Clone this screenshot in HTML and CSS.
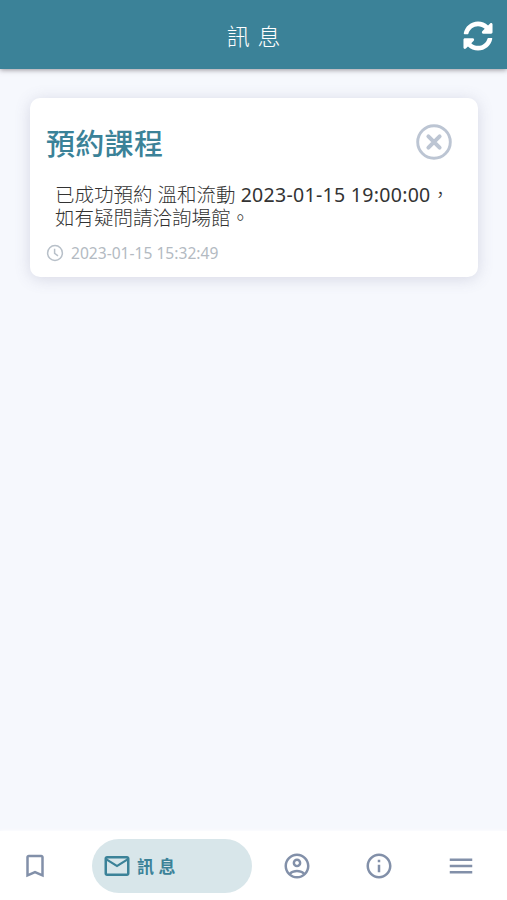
FILE: index.html
```html
<!DOCTYPE html>
<html lang="zh-Hant">
  <head>
    <meta charset="UTF-8" />
    <meta name="viewport" content="width=device-width, initial-scale=1.0" />
    <title>訊息</title>
    <link rel="stylesheet" href="styles.css">
  </head>

  <body>
    <header class="header">
      <h1 class="header-title">訊 息</h1>
      <button class="icon-button refresh-button" aria-label="重新整理">
        <svg viewBox="0 0 512 512" width="30" height="30">
          <path d="M370.72 133.28C339.458 104.008 298.888 87.962 255.848 88c-77.458.068-144.328 53.178-162.791 126.85-1.344 5.363-6.122 9.15-11.651 9.15H24.103c-7.498 0-13.194-6.807-11.807-14.176C33.933 94.924 134.813 8 256 8c66.448 0 126.791 26.136 171.315 68.685L463.03 40.97C478.149 25.851 504 36.559 504 57.941V192c0 13.255-10.745 24-24 24H345.941c-21.382 0-32.09-25.851-16.971-40.971l41.75-41.749zM32 296h134.059c21.382 0 32.09 25.851 16.971 40.971l-41.75 41.75c31.262 29.273 71.835 45.319 114.876 45.28 77.418-.07 144.315-53.144 162.787-126.849 1.344-5.363 6.122-9.15 11.651-9.15h57.304c7.498 0 13.194 6.807 11.807 14.176C478.067 417.076 377.187 504 256 504c-66.448 0-126.791-26.136-171.315-68.685L48.97 471.03C33.851 486.149 8 475.441 8 454.059V320c0-13.255 10.745-24 24-24z" />
        </svg>
      </button>
    </header>

    <main class="messages">
      <article class="card">
        <div class="card-top">
          <h2 class="card-title">預約課程</h2>
          <button class="icon-button close-button" aria-label="刪除">
            <svg viewBox="0 0 36 36" width="36" height="36">
              <circle cx="18" cy="18" r="16.3" stroke-width="2.9" />
              <path d="M12.4 12.4l11.2 11.2M23.6 12.4L12.4 23.6" stroke-width="4" stroke-linecap="round" />
            </svg>
          </button>
        </div>
        <p class="card-text">已成功預約 溫和流動 <span class="card-date">2023-01-15 19:00:00</span>，<br>如有疑問請洽詢場館。</p>
        <div class="card-time">
          <svg viewBox="0 0 18 18" width="18" height="18">
            <circle cx="9" cy="9" r="7.4" />
            <path d="M8.6 4.8v4.5l3.4 2.5" />
          </svg>
          <time>2023-01-15 15:32:49</time>
        </div>
      </article>
    </main>

    <nav class="nav">
      <a class="nav-item">
        <svg viewBox="0 0 24 24" width="30" height="30">
          <path d="M17 3H7c-1.1 0-2 .9-2 2v16l7-3 7 3V5c0-1.1-.9-2-2-2zm0 15l-5-2.18L7 18V5h10v13z" />
        </svg>
      </a>
      <a class="nav-item active">
        <svg viewBox="0 0 24 24" width="30" height="30">
          <path d="M22 6c0-1.1-.9-2-2-2H4c-1.1 0-2 .9-2 2v12c0 1.1.9 2 2 2h16c1.1 0 2-.9 2-2V6zm-2 0l-8 5-8-5h16zm0 12H4V8l8 5 8-5v10z" />
        </svg>
        <span class="nav-label">訊 息</span>
      </a>
      <a class="nav-item">
        <svg viewBox="0 0 24 24" width="30" height="30">
          <path fill-rule="evenodd" d="M12 2C6.48 2 2 6.48 2 12s4.48 10 10 10 10-4.48 10-10S17.52 2 12 2zM7.35 18.5C8.66 17.56 10.26 17 12 17s3.34.56 4.65 1.5C15.34 19.44 13.74 20 12 20s-3.34-.56-4.65-1.5zm10.79-1.38C16.45 15.8 14.32 15 12 15s-4.45.8-6.14 2.12C4.7 15.73 4 13.95 4 12c0-4.42 3.58-8 8-8s8 3.58 8 8c0 1.95-.7 3.73-1.86 5.12zM12 6c-1.93 0-3.5 1.57-3.5 3.5S10.07 13 12 13s3.5-1.57 3.5-3.5S13.93 6 12 6zm0 5c-.83 0-1.5-.67-1.5-1.5S11.17 8 12 8s1.5.67 1.5 1.5S12.83 11 12 11z" />
        </svg>
      </a>
      <a class="nav-item">
        <svg viewBox="0 0 24 24" width="30" height="30">
          <path d="M11 7h2v2h-2zm0 4h2v6h-2zm1-9C6.48 2 2 6.48 2 12s4.48 10 10 10 10-4.48 10-10S17.52 2 12 2zm0 18c-4.41 0-8-3.59-8-8s3.59-8 8-8 8 3.59 8 8-3.59 8-8 8z" />
        </svg>
      </a>
      <a class="nav-item">
        <svg viewBox="0 0 24 24" width="30" height="30">
          <path d="M3 18h18v-2H3v2zm0-5h18v-2H3v2zm0-7v2h18V6H3z" />
        </svg>
      </a>
    </nav>
  </body>
</html>
```
FILE: styles.css
```css
* {
  box-sizing: border-box;
}

body {
  margin: 0;
  height: 100vh;
  display: flex;
  flex-direction: column;
  font-family: "Noto Sans", "Noto Sans CJK TC", sans-serif;
  background-color: #f6f8fd;
  overflow: hidden;
}

h1,
h2,
p {
  margin: 0;
}

svg {
  display: block;
  flex: none;
}

.icon-button {
  padding: 0;
  border: none;
  background: none;
  cursor: pointer;
}

.header {
  height: 69px;
  flex: none;
  display: grid;
  grid-template-columns: 1fr auto 1fr;
  align-items: center;
  padding: 2px 14px 0;
  background-color: #3b8298;
  box-shadow: 0 1px 5px rgba(60, 50, 60, 0.5);
}

.header-title {
  grid-column: 2;
  padding-left: 1px;
  font-size: 23px;
  font-weight: 300;
  line-height: 34px;
  letter-spacing: 0.8px;
  color: white;
}

.refresh-button {
  justify-self: end;
  fill: white;
}

.messages {
  flex: 1;
  padding: 29px 29px 0 30px;
}

.card {
  height: 179px;
  padding: 24px 26px 0 16px;
  border-radius: 10px;
  background-color: white;
  box-shadow: 0 2px 16px rgba(90, 90, 130, 0.2);
}

.card-top {
  display: flex;
  justify-content: space-between;
  align-items: center;
  height: 40px;
}

.card-title {
  padding-top: 4px;
  font-size: 29px;
  font-weight: 500;
  line-height: 40px;
  letter-spacing: 0.3px;
  color: #3b8298;
}

.close-button svg {
  fill: none;
  stroke: #bcc5d3;
}

.card-text {
  margin: 21px 0 0 9px;
  font-size: 19.5px;
  font-weight: 300;
  line-height: 23px;
  white-space: nowrap;
  color: #333;
}

.card-date {
  font-weight: 400;
  letter-spacing: 0.3px;
}

.card-time {
  display: flex;
  align-items: center;
  gap: 7px;
  margin-top: 14px;
  font-size: 15.6px;
  line-height: 20px;
  color: #b3bac2;
}

.card-time svg {
  fill: none;
  stroke: #b8c0c9;
  stroke-width: 1.5;
}

.nav {
  height: 69px;
  flex: none;
  display: flex;
  align-items: center;
  gap: 52px;
  padding-left: 20px;
  background-color: white;
  box-shadow: 0 0 4px white;
}

.nav-item {
  display: flex;
  align-items: center;
  fill: #8290a9;
}

.active {
  width: 160px;
  height: 54px;
  margin: 0 -22px 0 -10px;
  padding-left: 10px;
  gap: 5px;
  border-radius: 27px;
  background-color: #d8e6ea;
  color: #3b8298;
  fill: #3b8298;
}

.nav-label {
  padding-top: 2px;
  font-size: 17px;
  font-weight: 700;
  line-height: 24px;
}
```
